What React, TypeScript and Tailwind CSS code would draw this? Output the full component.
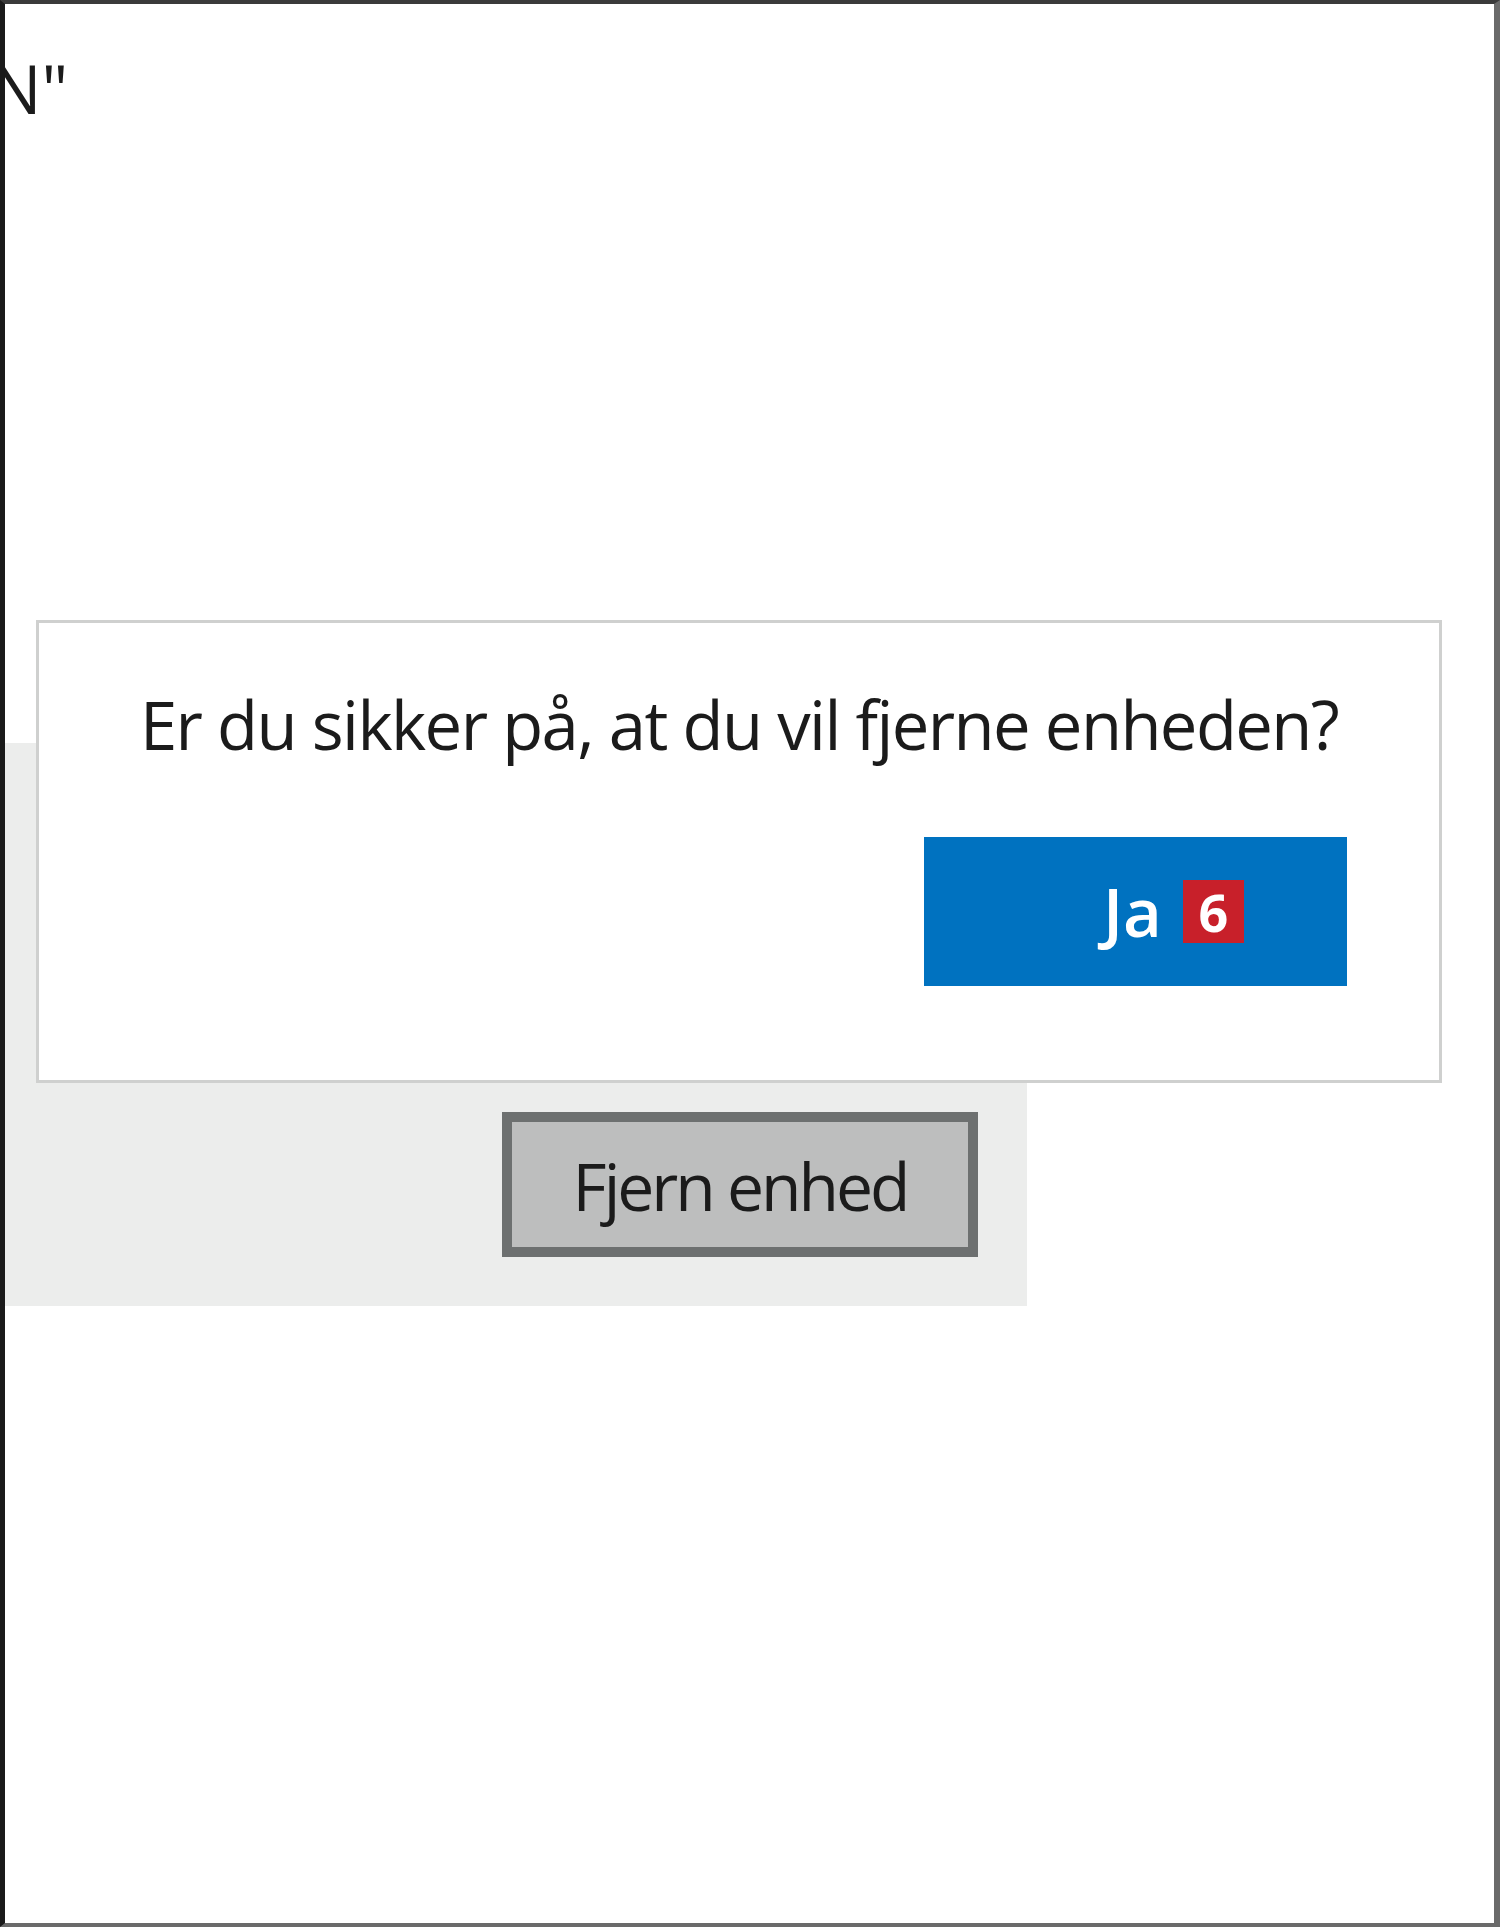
export default function App() {
  return (
    <div className="relative w-[1500px] h-[1927px] overflow-hidden bg-white border-l-[5px] border-l-[#1a1a1a] border-t-[4px] border-t-[#3a3a3a] border-r-[6px] border-r-[#6a6a6a] border-b-[4px] border-b-[#6a6a6a] font-['Open_Sans',sans-serif] text-[#1b1b1b]">
      {/* clipped title from the page behind */}
      <p className="ml-[-14px] mt-[51px] text-[67px] leading-none whitespace-nowrap">N"</p>

      {/* gray settings panel */}
      <div className="mt-[621px] w-[1022px] h-[563px] bg-[#ecedec] pl-[497px] pt-[369px]">
        <button className="w-[476px] h-[145px] border-[10px] border-[#6d7070] bg-[#bdbebe] text-[66px] leading-none tracking-[-3px] text-[#1b1b1b] flex items-center justify-center">
          Fjern enhed
        </button>
      </div>

      {/* confirmation flyout */}
      <div className="absolute left-[31px] top-[616px] w-[1406px] h-[463px] bg-white border-[3px] border-[#cfd0cf] flex flex-col">
        <p className="mt-[68px] text-center text-[67px] leading-none tracking-[-1.6px] whitespace-nowrap">
          Er du sikker på, at du vil fjerne enheden?
        </p>
        <div className="mt-[79px] flex justify-end pr-[92px]">
          <button className="w-[423px] h-[149px] bg-[#0072c0] flex items-center pl-[179px] gap-[21px]">
            <span className="text-[67px] leading-none font-semibold text-white">Ja</span>
            <span className="w-[61px] h-[63px] bg-[#c8202a] text-white font-bold text-[52px] leading-none flex items-center justify-center">
              6
            </span>
          </button>
        </div>
      </div>
    </div>
  );
}
